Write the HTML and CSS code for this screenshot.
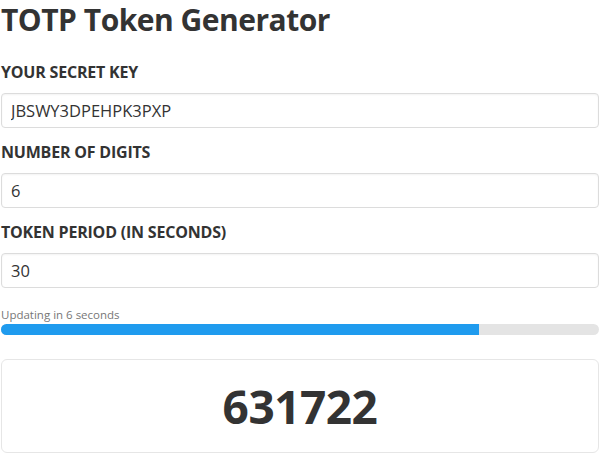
FILE: index.html
```html
<html>

<head>
    <title>TOTP Token Generator</title>

    <link rel="stylesheet" href="styles.css">
</head>

<body>
    <div class="page">
        <h1>TOTP Token Generator</h1>

        <div class="field">
            <label for="secret">Your secret key</label>
            <input type="text" id="secret" value="JBSWY3DPEHPK3PXP">
        </div>

        <div class="field">
            <label for="digits">Number of digits</label>
            <input type="text" id="digits" value="6">
        </div>

        <div class="field">
            <label for="period">Token period (in seconds)</label>
            <input type="text" id="period" value="30">
        </div>

        <div class="countdown">
            <span class="countdown-text">Updating in 6 seconds</span>
            <div class="progress">
                <div class="progress-bar" style="width: 80%"></div>
            </div>
        </div>

        <div class="token-card">
            <span class="token">631722</span>
        </div>
    </div>
</body>

</html>
```

FILE: styles.css
```css
body {
    margin: 0;
    background-color: #ffffff;
    color: #333333;
    font-family: "Open Sans", "Noto Sans", sans-serif;
}

.page {
    padding: 0 1px;
}

h1 {
    margin: 0;
    padding-top: 2px;
    font-size: 30px;
    line-height: 36px;
    font-weight: 700;
    letter-spacing: -0.5px;
}

.field {
    margin-top: 24px;
}

.field + .field {
    margin-top: 14px;
}

.field label {
    display: block;
    text-transform: uppercase;
    font-size: 16px;
    line-height: 20px;
    font-weight: 700;
    letter-spacing: -0.2px;
    margin-bottom: 11px;
}

.field input {
    display: block;
    width: 100%;
    box-sizing: border-box;
    height: 35px;
    padding: 0 9px;
    border: 1px solid #dcdcdc;
    border-radius: 4px;
    box-shadow: inset 0 1px 2px rgba(0, 0, 0, 0.05);
    font-family: "Open Sans", "Noto Sans", sans-serif;
    font-size: 16.5px;
    color: #333333;
    outline: none;
}

.countdown {
    margin-top: 20px;
}

.countdown-text {
    display: block;
    font-size: 11.5px;
    line-height: 14px;
    color: #777777;
    margin-bottom: 2px;
}

.progress {
    height: 11px;
    border-radius: 6px;
    background-color: #e4e4e4;
    overflow: hidden;
}

.progress-bar {
    height: 100%;
    background-color: #1f9bee;
}

.token-card {
    margin-top: 24px;
    height: 94px;
    box-sizing: border-box;
    border: 1px solid #e6e6e6;
    border-radius: 6px;
    display: flex;
    align-items: center;
    justify-content: center;
}

.token {
    font-size: 46px;
    font-weight: 700;
    letter-spacing: -0.5px;
}
```
